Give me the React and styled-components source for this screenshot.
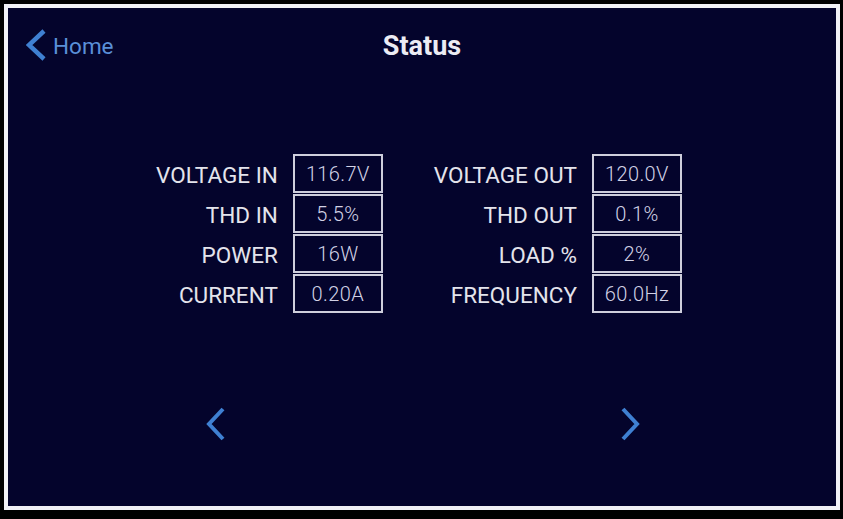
import React from 'react'
import styled, { createGlobalStyle } from 'styled-components'

const GlobalStyle = createGlobalStyle`
    html, body {
        margin: 0;
        padding: 0;
        background: #000;
    }
    body {
        font-family: Roboto, "Liberation Sans", sans-serif;
    }
`;

const input = [
    { label: 'VOLTAGE IN', value: '116.7V' },
    { label: 'THD IN', value: '5.5%' },
    { label: 'POWER', value: '16W' },
    { label: 'CURRENT', value: '0.20A' },
];

const output = [
    { label: 'VOLTAGE OUT', value: '120.0V' },
    { label: 'THD OUT', value: '0.1%' },
    { label: 'LOAD %', value: '2%' },
    { label: 'FREQUENCY', value: '60.0Hz' },
];

function Chevron({ dir = 'left', w = 20, h = 34, stroke = 4 }) {
    const pts = dir === 'left'
        ? `${w - 3},2 3,${h / 2} ${w - 3},${h - 2}`
        : `3,2 ${w - 3},${h / 2} 3,${h - 2}`;
    return (
        <svg width={w} height={h} viewBox={`0 0 ${w} ${h}`}>
            <polyline points={pts} fill="none" stroke="#3f80d2" strokeWidth={stroke} strokeLinejoin="miter" />
        </svg>
    );
}

function Group({ rows }) {
    return (
        <Table>
            {rows.map((r) => (
                <React.Fragment key={r.label}>
                    <Label>{r.label}</Label>
                    <Cell>{r.value}</Cell>
                </React.Fragment>
            ))}
        </Table>
    );
}

export default function App() {
    return (
        <>
            <GlobalStyle />
            <Frame>
                <Header>
                    <HomeLink>
                        <Chevron dir="left" w={21} h={32} stroke={4.5} />
                        <span>Home</span>
                    </HomeLink>
                    <Title>Status</Title>
                </Header>
                <Readings>
                    <Group rows={input} />
                    <Group rows={output} />
                </Readings>
                <Pager>
                    <PageButton><Chevron dir="left" /></PageButton>
                    <PageButton><Chevron dir="right" /></PageButton>
                </Pager>
            </Frame>
        </>
    )
}

const Frame = styled.div`
    box-sizing: border-box;
    margin: 4px;
    width: 836px;
    height: 506px;
    border: 4px solid #f2f2f6;
    background: #04042c;
    display: flex;
    flex-direction: column;
`;

const Header = styled.div`
    position: relative;
    height: 32px;
    margin-top: 21px;
    padding-left: 18px;
    display: flex;
    align-items: center;
`;

const HomeLink = styled.div`
    display: flex;
    align-items: center;
    gap: 6px;
    color: #5a8fd8;
    font-size: 22.5px;
    span{
        margin-top: 1px;
    }
`;

const Title = styled.h1`
    position: absolute;
    left: 0;
    right: 0;
    top: 1px;
    margin: 0;
    text-align: center;
    line-height: 32px;
    font-size: 27px;
    font-weight: 700;
    color: #ececf4;
    pointer-events: none;
`;

const Readings = styled.div`
    margin-top: 93px;
    display: flex;
    justify-content: center;
    gap: 51px;
    padding-right: 6px;
`;

const Table = styled.div`
    display: grid;
    grid-template-columns: auto 90px;
    column-gap: 15px;
    row-gap: 1px;
`;

const Label = styled.div`
    text-align: right;
    align-self: center;
    padding-top: 3px;
    font-size: 22.5px;
    color: #e4e4ec;
    line-height: 1;
`;

const Cell = styled.div`
    box-sizing: border-box;
    height: 39px;
    border: 2px solid #cfcfdc;
    display: flex;
    align-items: center;
    justify-content: center;
    font-size: 20px;
    font-weight: 300;
    letter-spacing: 0.4px;
    color: #d2d2e6;
`;

const Pager = styled.div`
    margin-top: 94px;
    display: flex;
    justify-content: space-between;
    padding: 0 196px 0 198px;
`;

const PageButton = styled.div`
    width: 20px;
    height: 34px;
    display: flex;
`;
